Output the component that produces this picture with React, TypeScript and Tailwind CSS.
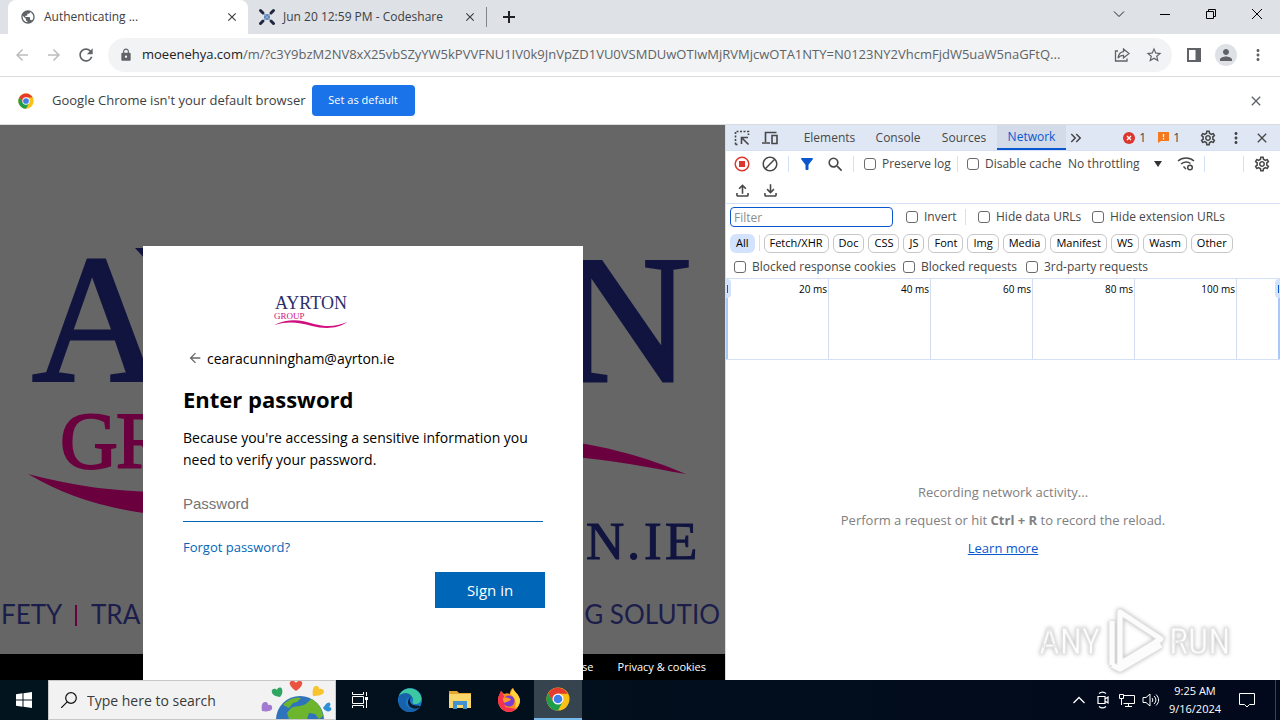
import React from 'react';
import {
  MdArrowBack,
  MdArrowForward,
  MdBlock,
  MdClose,
  MdFilterAlt,
  MdKeyboardDoubleArrowRight,
  MdLock,
  MdMoreVert,
  MdOutlineFileDownload,
  MdOutlineFileUpload,
  MdOutlineSettings,
  MdPerson,
  MdPublic,
  MdRefresh,
  MdSearch,
  MdStarOutline,
} from 'react-icons/md';

interface IconButtonProps {
  label: string;
  className?: string;
  children: React.ReactNode;
}

const IconButton: React.FC<IconButtonProps> = ({ label, className = 'size-8', children }) => (
  <button aria-label={label} className={`flex shrink-0 items-center justify-center ${className}`}>
    {children}
  </button>
);

const ChromeLogo = ({ className }: { className: string }) => (
  <svg viewBox="0 0 48 48" className={className} aria-hidden="true">
    <circle cx="24" cy="24" r="23" fill="#fbc116" />
    <path d="M4.1 12.5 L14.5 30 L24 24 L24 13.5 L43.9 13.5 A23 23 0 0 0 4.1 12.5Z" fill="#e33b2e" />
    <path d="M4.1 12.5 A23 23 0 0 0 24 47 L33.5 29.5 L24 34 L14.5 29.5 Z" fill="#1e9e4a" />
    <circle cx="24" cy="24" r="11" fill="#fff" />
    <circle cx="24" cy="24" r="8.6" fill="#3f7ee8" />
  </svg>
);

const CodeshareIcon = () => (
  <svg viewBox="0 0 18 18" className="size-[18px] shrink-0" aria-hidden="true">
    <path
      d="M2.5 2.5 5 5M15.5 2.5 13 5M2.5 15.5 5 13M15.5 15.5 13 13"
      stroke="#20263c"
      strokeWidth="3"
      strokeLinecap="round"
    />
    <circle cx="9" cy="9" r="3" fill="#5c84bd" />
    <path d="M6 6 12 12M12 6 6 12" stroke="#8da6cb" strokeWidth="1" />
  </svg>
);

const TabStrip = () => (
  <div className="flex h-[34px] items-stretch bg-[#dee1e6] pl-2 text-[12px] text-[#3c4043]">
    <div className="flex w-60 items-center rounded-t-lg bg-white pr-2 pl-3">
      <MdPublic className="size-4 text-[#5f6368]" />
      <span className="ml-2 flex-1">Authenticating ...</span>
      <IconButton label="Close tab" className="size-4">
        <MdClose className="size-3.5" />
      </IconButton>
    </div>
    <div className="flex w-[238px] items-center pr-2 pl-2.5">
      <CodeshareIcon />
      <span className="ml-[7px] flex-1">Jun 20 12:59 PM - Codeshare</span>
      <IconButton label="Close tab" className="size-4">
        <MdClose className="size-3.5" />
      </IconButton>
    </div>
    <div className="h-5 w-px self-center bg-[#80868b]" />
    <IconButton label="New tab" className="w-11">
      <svg viewBox="0 0 12 12" className="size-3" stroke="#202124" strokeWidth="2">
        <path d="M6 0V12M0 6H12" />
      </svg>
    </IconButton>
    <div className="ml-auto flex pb-1.5">
      <IconButton label="Search tabs" className="w-[46px]">
        <svg viewBox="0 0 12 12" className="size-3" fill="none" stroke="#202124">
          <path d="M1 3.5 6 8.5 11 3.5" />
        </svg>
      </IconButton>
      <IconButton label="Minimize" className="w-[46px]">
        <svg viewBox="0 0 10 10" className="size-2.5" stroke="#000">
          <path d="M0 5.5H10" />
        </svg>
      </IconButton>
      <IconButton label="Restore" className="w-[46px]">
        <svg viewBox="0 0 10 10" className="size-2.5" fill="none" stroke="#000">
          <path d="M.5 2.5H7.5V9.5H.5ZM2.5 2.5V.5H9.5V7.5H7.5" />
        </svg>
      </IconButton>
      <IconButton label="Close window" className="w-[46px]">
        <svg viewBox="0 0 10 10" className="size-2.5" stroke="#000">
          <path d="M0 0 10 10M10 0 0 10" />
        </svg>
      </IconButton>
    </div>
  </div>
);

const AddressBar = () => (
  <div className="flex h-[43px] items-center border-b border-[#dadce0] bg-white px-1.5 text-[#5f6368]">
    <IconButton label="Back">
      <MdArrowBack className="size-[18px] text-[#babcbe]" />
    </IconButton>
    <IconButton label="Forward">
      <MdArrowForward className="size-[18px] text-[#babcbe]" />
    </IconButton>
    <IconButton label="Reload">
      <MdRefresh className="size-5" />
    </IconButton>
    <div className="ml-1.5 flex h-[34px] min-w-0 flex-1 items-center rounded-full bg-[#f1f3f4] pr-0.5 pl-[11px]">
      <MdLock className="size-3.5 shrink-0" />
      <p className="ml-[9px] flex-1 text-[13px] whitespace-nowrap">
        <span className="text-[#202124]">moeenehya.com</span>
        /m/?c3Y9bzM2NV8xX25vbSZyYW5kPVVFNU1IV0k9JnVpZD1VU0VSMDUwOTIwMjRVMjcwOTA1NTY=N0123NY2VhcmFjdW5uaW5naGFtQ...
      </p>
      <IconButton label="Share">
        <svg viewBox="0 0 16 16" className="size-4" fill="none" stroke="#5f6368" strokeWidth="1.3">
          <path d="M4 4H1.5V14H13V11.5" />
          <path d="M9.5 2 15 6.5 9.5 11V8.3C7 8.3 5.5 9 4 11 4.5 7.5 6.5 5 9.5 4.6Z" />
        </svg>
      </IconButton>
      <IconButton label="Bookmark this tab">
        <MdStarOutline className="size-[18px]" />
      </IconButton>
    </div>
    <IconButton label="Side panel" className="ml-1.5 size-8">
      <svg viewBox="0 0 14 14" className="size-3.5">
        <path d="M1 1H13V13H1Z" fill="none" stroke="#5f6368" strokeWidth="2" />
        <path d="M8.5 0H14V14H8.5Z" fill="#5f6368" />
      </svg>
    </IconButton>
    <IconButton label="Profile">
      <span className="flex size-[22px] items-center justify-center rounded-full bg-[#dee1e6]">
        <MdPerson className="size-[18px]" />
      </span>
    </IconButton>
    <IconButton label="Menu">
      <MdMoreVert className="size-[18px]" />
    </IconButton>
  </div>
);

const DefaultBrowserBar = () => (
  <div className="flex h-12 items-center border-b border-[#dadce0] bg-white pr-4 pl-[18px]">
    <ChromeLogo className="size-4" />
    <span className="ml-[18px] text-[13px] text-[#3c4043]">Google Chrome isn't your default browser</span>
    <button className="ml-1.5 h-[31px] w-[103px] rounded bg-[#1a73e8] text-[11px] text-white">
      Set as default
    </button>
    <IconButton label="Dismiss" className="ml-auto size-4">
      <MdClose className="size-4 text-[#5f6368]" />
    </IconButton>
  </div>
);

/* Dimmed company artwork, only the parts that show beside the dialog */
const Backdrop = () => (
  <svg
    viewBox="0 0 725 555"
    preserveAspectRatio="xMinYMin slice"
    className="absolute inset-0 h-full w-full font-['Liberation_Serif',serif]"
    aria-hidden="true"
  >
    <g fill="#10143f" stroke="#10143f" strokeWidth="3" fontSize="182">
      <text x="32" y="256">A</text>
      <text x="560" y="256">N</text>
    </g>
    <path d="M135 123H160V135H146Z" fill="#10143f" />
    <g fill="#6b003f" stroke="#6b003f" strokeWidth="2" fontSize="80">
      <text x="60" y="343">G</text>
      <text x="116" y="343">R</text>
    </g>
    <path
      d="M28 349C75 361 110 366 160 367 260 366 400 314 520 312 600 316 650 334 686 349 650 343 610 334 570 332 460 330 300 394 180 392 120 388 70 374 28 349Z"
      fill="#6b003f"
    />
    <g fill="#10143f" stroke="#10143f" fontSize="53">
      <text x="586" y="434">N</text>
      <text x="627" y="434">.</text>
      <text x="644" y="434">I</text>
      <text x="665" y="434">E</text>
    </g>
    <g fill="#1b1d4b" fontSize="26" fontFamily="Lato, sans-serif">
      <text x="1" y="499">FETY</text>
      <text x="91" y="499">TRA</text>
      <text x="720" y="499" textAnchor="end">
        G SOLUTIO
      </text>
    </g>
    <path d="M76 480V501" stroke="#6b003f" strokeWidth="2" />
  </svg>
);

const CompanyLogo = () => (
  <svg
    viewBox="0 0 74 36"
    className="h-9 w-[74px] font-['Liberation_Serif',serif]"
    role="img"
    aria-label="Ayrton Group"
  >
    <text x="1" y="15" fontSize="18" fill="#2b2f6b">AYRTON</text>
    <text x="0" y="25" fontSize="9" fill="#d0107f">GROUP</text>
    <path d="M0 31C16 24 26 26 40 30 52 33 62 33 73 28 64 35 50 35 38 32 24 28 14 27 0 31Z" fill="#d0107f" />
  </svg>
);

const SignInDialog = () => (
  <form
    onSubmit={(e) => e.preventDefault()}
    className="flex h-full w-[440px] flex-col items-start bg-white px-10 pt-12 text-black"
  >
    <div className="ml-[91px]">
      <CompanyLogo />
    </div>
    <div className="mt-4 flex h-6 items-center pl-1 text-[14px]">
      <button type="button" aria-label="Back" className="mr-1">
        <MdArrowBack className="size-4 text-[#666]" />
      </button>
      cearacunningham@ayrton.ie
    </div>
    <h1 className="mt-[13px] text-[22px] leading-8 font-bold">Enter password</h1>
    <p className="mt-3 text-[14px] leading-[22px]">
      Because you're accessing a sensitive information you need to verify your password.
    </p>
    <input
      type="password"
      placeholder="Password"
      aria-label="Password"
      className="mt-[15px] h-9 w-full border-b border-[#0067b8] font-['Liberation_Sans',sans-serif] text-[15px] outline-none placeholder:text-[#757575]"
    />
    <a href="#" className="mt-[15px] text-[13px] leading-5 text-[#0067b8]">Forgot password?</a>
    <button className="mt-[15px] -mr-0.5 h-9 w-[110px] self-end bg-[#0067b8] text-[15px] text-white">
      Sign in
    </button>
  </form>
);

const WebPage = () => (
  <main className="relative flex min-w-0 flex-1 flex-col justify-end overflow-hidden bg-[#666]">
    <Backdrop />
    <footer className="relative flex h-[26px] items-center justify-end gap-6 bg-black pr-[19px] text-[11px] text-white">
      <a href="#">Terms of use</a>
      <a href="#">Privacy & cookies</a>
    </footer>
    <div className="absolute inset-x-0 top-[121px] bottom-0 flex justify-center pl-px">
      <SignInDialog />
    </div>
  </main>
);

const Check = ({ label, className = '' }: { label: string; className?: string }) => (
  <label className={`flex shrink-0 items-center gap-1.5 whitespace-nowrap ${className}`}>
    <input type="checkbox" className="size-3 appearance-none rounded-[3px] border border-[#6b6b6b] bg-white" />
    {label}
  </label>
);

const Divider = () => <div className="h-4 w-px shrink-0 bg-[#d3e0f5]" />;

const resourceTypes = ['Fetch/XHR', 'Doc', 'CSS', 'JS', 'Font', 'Img', 'Media', 'Manifest', 'WS', 'Wasm', 'Other'];
const ticks = ['20 ms', '40 ms', '60 ms', '80 ms', '100 ms'];

const PanelTabs = () => (
  <div className="flex h-[26px] items-center border-b border-[#d3e0f5] bg-[#dfe7f5] pr-1.5">
    <IconButton label="Inspect element" className="ml-0.5 size-7">
      <svg viewBox="0 0 16 16" className="size-4" fill="none" stroke="#474747" strokeWidth="1.6">
        <path d="M1.5 14.5V1.5H14.5V5" strokeDasharray="2 1.5" />
        <path d="M1.5 14.5H5" strokeDasharray="2 1.5" />
        <path d="M7.5 14V7.5H14M8 8 14.5 14.5" />
      </svg>
    </IconButton>
    <IconButton label="Device toolbar" className="size-7">
      <svg viewBox="0 0 16 16" className="size-4" fill="none" stroke="#474747" strokeWidth="1.6">
        <path d="M14.5 2.5H3.5V12M0 13H8" />
        <path d="M10 5.5H15V13.5H10Z" />
      </svg>
    </IconButton>
    <div role="tablist" className="ml-2.5 flex h-full items-stretch">
      <button role="tab" className="w-[71px]">Elements</button>
      <button role="tab" className="w-[66px]">Console</button>
      <button role="tab" className="w-[66px]">Sources</button>
      <button
        role="tab"
        aria-selected="true"
        className="w-[69px] border-b-2 border-[#0b57d0] bg-[#d3dbe9] text-[#0b57d0]"
      >
        Network
      </button>
    </div>
    <IconButton label="More tabs" className="size-5">
      <MdKeyboardDoubleArrowRight className="size-[18px]" />
    </IconButton>
    <div className="ml-auto flex items-center">
      <svg viewBox="0 0 12 12" className="size-3" aria-hidden="true">
        <circle cx="6" cy="6" r="6" fill="#dc362e" />
        <path d="M4 4 8 8M8 4 4 8" stroke="#fff" strokeWidth="1.3" />
      </svg>
      <span className="ml-1">1</span>
      <svg viewBox="0 0 11 11" className="ml-3 size-[11px]" aria-hidden="true">
        <path d="M0 0H11V9H3L0 11Z" fill="#f4791f" />
        <path d="M5.5 2V5M5.5 6V7.5" stroke="#fff" strokeWidth="1.3" />
      </svg>
      <span className="ml-1">1</span>
    </div>
    <IconButton label="Settings" className="ml-3.5 size-7">
      <MdOutlineSettings className="size-[18px]" />
    </IconButton>
    <IconButton label="More options" className="size-7">
      <MdMoreVert className="size-[18px]" />
    </IconButton>
    <IconButton label="Close developer tools" className="size-6">
      <MdClose className="size-4" />
    </IconButton>
  </div>
);

const NetworkToolbar = () => (
  <div className="border-b border-[#d3e0f5]">
    <div className="flex h-[26px] items-center pl-0.5">
      <IconButton label="Stop recording" className="size-7">
        <svg viewBox="0 0 16 16" className="size-4">
          <circle cx="8" cy="8" r="6.8" fill="none" stroke="#dc362e" strokeWidth="1.5" />
          <path d="M5 5H11V11H5Z" fill="#dc362e" />
        </svg>
      </IconButton>
      <IconButton label="Clear" className="mr-1 size-7">
        <MdBlock className="size-[18px]" />
      </IconButton>
      <Divider />
      <IconButton label="Filter" className="ml-1 size-7">
        <MdFilterAlt className="size-[18px] text-[#0b57d0]" />
      </IconButton>
      <IconButton label="Search" className="mr-1 size-7">
        <MdSearch className="size-[19px]" />
      </IconButton>
      <Divider />
      <Check label="Preserve log" className="ml-2.5 w-[93px]" />
      <Divider />
      <Check label="Disable cache" className="ml-[9px] w-[101px]" />
      <select aria-label="Throttling" className="w-[94px] appearance-none bg-transparent">
        <option>No throttling</option>
      </select>
      <svg viewBox="0 0 8 6" className="-ml-2 h-1.5 w-2" fill="#333" aria-hidden="true">
        <path d="M0 0H8L4 6Z" />
      </svg>
      <IconButton label="Network conditions" className="ml-2.5 size-7">
        <svg viewBox="0 0 18 16" className="h-4 w-[18px]" fill="none" stroke="#474747" strokeWidth="1.5">
          <path d="M1 5C5.5 1 12.5 1 17 5M4 8C7 5.3 11 5.3 13.5 7.5" />
          <path d="M6.5 10.5 9 13" />
          <circle cx="13" cy="11.5" r="2.3" />
        </svg>
      </IconButton>
      <div className="ml-1">
        <Divider />
      </div>
      <div className="ml-auto flex items-center">
        <Divider />
        <IconButton label="Network settings" className="mx-1 size-7">
          <MdOutlineSettings className="size-[18px]" />
        </IconButton>
      </div>
    </div>
    <div className="flex h-[26px] items-center pl-0.5">
      <IconButton label="Import HAR" className="size-7">
        <MdOutlineFileUpload className="size-[19px]" />
      </IconButton>
      <IconButton label="Export HAR" className="size-7">
        <MdOutlineFileDownload className="size-[19px]" />
      </IconButton>
    </div>
  </div>
);

const FilterBar = () => (
  <div className="border-b border-[#d3e0f5]">
    <div className="flex h-[26px] items-center pl-1">
      <input
        type="text"
        placeholder="Filter"
        aria-label="Filter"
        className="h-5 w-[163px] rounded border border-[#0b57d0] px-[3px] outline-none placeholder:text-[#8c8c8c]"
      />
      <Check label="Invert" className="ml-[13px] w-[59px]" />
      <Divider />
      <Check label="Hide data URLs" className="ml-3 w-[114px]" />
      <Check label="Hide extension URLs" />
    </div>
    <div className="flex h-[26px] items-center gap-1 pl-1 text-[11px] text-black">
      <button className="h-[19px] rounded-md bg-[#d3e3fd] px-1.5">All</button>
      <Divider />
      {resourceTypes.map((type) => (
        <button key={type} className="h-[19px] rounded-md border border-[#c7c7c7] px-[5px]">
          {type}
        </button>
      ))}
    </div>
    <div className="flex h-[22px] items-center pl-2">
      <Check label="Blocked response cookies" className="w-[169px]" />
      <Check label="Blocked requests" className="w-[123px]" />
      <Check label="3rd-party requests" />
    </div>
  </div>
);

const Overview = () => (
  <div className="relative flex h-[81px] border-b border-[#d3e0f5] pl-px text-[10px] text-black">
    {ticks.map((tick) => (
      <div key={tick} className="w-[102px] shrink-0 border-r border-[#d3dcf0] pt-[3px] pr-px text-right">
        {tick}
      </div>
    ))}
    <div className="absolute inset-y-0 left-0 w-0.5 bg-[#a8c7fa]" />
    <div className="absolute top-0 left-0 flex h-[19px] w-[5px] items-center rounded-r bg-[#d3e3fd] pl-px">
      <div className="h-2 w-px bg-[#0b57d0]" />
    </div>
    <div className="absolute inset-y-0 right-0 w-0.5 bg-[#a8c7fa]" />
    <div className="absolute top-0 right-0 flex h-[19px] w-[5px] items-center justify-end rounded-l bg-[#d3e3fd] pr-px">
      <div className="h-2 w-px bg-[#0b57d0]" />
    </div>
  </div>
);

const Watermark = () => (
  <svg
    viewBox="0 0 200 72"
    className="absolute right-[44px] bottom-1 h-[72px] w-[200px] drop-shadow-[0_0_2px_#bbbbbb]"
    aria-hidden="true"
  >
    <g
      fill="#fdfdfd"
      stroke="#e4e4e4"
      fontSize="36"
      fontFamily="'Liberation Sans Narrow','Roboto Condensed',Roboto,sans-serif"
    >
      <text x="3" y="50">ANY</text>
      <text x="133" y="50">RUN</text>
    </g>
    <path
      d="M76 61V17M84 8 125 35 84 60ZM76 61 84 65 125 41"
      fill="none"
      stroke="#e0e0e0"
      strokeWidth="7"
      strokeLinejoin="round"
    />
    <path
      d="M76 61V17M84 8 125 35 84 60ZM76 61 84 65 125 41"
      fill="none"
      stroke="#fcfcfc"
      strokeWidth="5"
      strokeLinejoin="round"
    />
  </svg>
);

const DevTools = () => (
  <aside className="relative flex w-[555px] shrink-0 flex-col border-l border-[#d3dcea] bg-white text-[12px] text-[#474747]">
    <PanelTabs />
    <NetworkToolbar />
    <FilterBar />
    <Overview />
    <div className="flex flex-1 flex-col items-center justify-center gap-2 text-[13px] leading-5 text-[#808080]">
      <p>Recording network activity...</p>
      <p>
        Perform a request or hit <b>Ctrl + R</b> to record the reload.
      </p>
      <a href="#" className="text-[#0b57d0] underline">Learn more</a>
    </div>
    <Watermark />
  </aside>
);

const EarthIcon = () => (
  <svg viewBox="0 0 72 38" className="h-[38px] w-[72px]" aria-hidden="true">
    <circle cx="39" cy="39" r="24" fill="#2f73bd" />
    <path d="M22 24C27 18 34 16 40 17L36 21 32 22 28 27Z" fill="#6cb52d" />
    <path d="M30 27C36 24 42 26 46 22L50 18C57 21 61 28 62 35L58 38 54 33 48 32 46 38H28L26 32Z" fill="#6cb52d" />
    <path d="M35 10C29 6 28 2 29 1 31-1 34 0 35 2 36 0 39-1 41 1 42 3 40 7 35 10Z" fill="#ea5340" />
    <path d="M19 16C12 15 10 12 11 9 13 7 15 8 16 9 17 6 20 6 21 8 22 11 21 14 19 16Z" fill="#2fa562" />
    <path d="M52 15C51 10 52 5 55 5 58 5 58 7 58 8 61 7 63 9 63 11 62 14 57 15 52 15Z" fill="#f7c32e" />
    <path d="M1 30C0 25 1 21 4 21 7 21 7 23 7 24 10 23 12 25 11 28 10 30 6 31 1 30Z" fill="#a27bd0" />
    <path d="M62 27C64 24 67 20 69 22 70 24 69 25 68 26 71 26 71 29 69 30 67 31 64 30 62 27Z" fill="#2f8fd8" />
  </svg>
);

const EdgeIcon = () => (
  <svg viewBox="0 0 24 24" className="size-6">
    <circle cx="12" cy="12" r="12" fill="#1b78c9" />
    <path d="M1 8C4-1 17-2 22 6 25 11 23 17 16 16 13 15 16 13 15 10 12 6 5 5 1 8Z" fill="#3cc8a0" />
    <path d="M1 8C6 3 12 5 14 9 9 8 6 14 9 18 13 23 18 21 22 19 17 26 5 26 1 17Z" fill="#1762ab" />
    <path d="M14 9C11 10 11 15 15 17 19 18 22 17 22 19 18 22 11 21 10 15 10 11 12 9 14 9Z" fill="#0a1c2c" />
  </svg>
);

const ExplorerIcon = () => (
  <svg viewBox="0 0 22 20" className="h-5 w-[22px]">
    <path d="M0 1H8L10 3H22V18H0Z" fill="#e5a62f" />
    <path d="M0 4H22V18H0Z" fill="#fbd66b" />
    <path d="M4 11H18V19H14V15H8V19H4Z" fill="#3f92cf" />
  </svg>
);

const FirefoxIcon = () => (
  <svg viewBox="0 0 24 24" className="size-6">
    <path d="M1 12C1 8 3 6 4 3L7 6C9 5 11 5 13 6 13 3 14 1 16 0 17 4 22 6 23 12 23 19 18 24 12 24 6 24 1 19 1 12Z" fill="#ff8a1e" />
    <path d="M1 12C1 8 3 6 4 3L7 8 8 19 19 21C15 25 8 25 4 20 2 18 1 15 1 12Z" fill="#f7324f" />
    <path d="M16 0C17 4 22 6 23 12 23 17 20 20 18 20 20 14 18 9 13 6Z" fill="#ffd33b" />
    <circle cx="12" cy="13" r="5.5" fill="#7a3fd0" />
    <path d="M6 10C9 9 11 10 14 11 13 14 9 13 8 15 6 14 6 12 6 10Z" fill="#ff9c27" />
  </svg>
);

const Taskbar = () => (
  <div className="flex h-10 shrink-0 items-stretch bg-gradient-to-r from-[#02141d] to-[#02091c] text-white">
    <IconButton label="Start" className="w-12">
      <svg viewBox="0 0 16 16" className="size-4" fill="#fff">
        <path d="M0 2.2 6.5 1.3V7.5H0ZM7.5 1.2 16 0V7.5H7.5ZM0 8.5H6.5V14.7L0 13.8ZM7.5 8.5H16V16L7.5 14.8Z" />
      </svg>
    </IconButton>
    <label className="flex w-72 items-center border border-[#c8c8c8] bg-[#f2f2f2] pl-3">
      <svg viewBox="0 0 16 16" className="size-4 shrink-0" fill="none" stroke="#111" strokeWidth="1.2">
        <circle cx="10" cy="6" r="5.3" />
        <path d="M6.2 9.8 0 16" />
      </svg>
      <input
        type="text"
        placeholder="Type here to search"
        aria-label="Type here to search"
        className="ml-2.5 min-w-0 flex-1 bg-transparent text-[14px] outline-none placeholder:text-[#3a3a3a]"
      />
      <span className="mr-0.5 self-end">
        <EarthIcon />
      </span>
    </label>
    <IconButton label="Task view" className="w-12">
      <svg viewBox="0 0 16 16" className="size-4" fill="none" stroke="#fff">
        <path d="M.5 0V2.5H11.5V0M.5 4.5H11.5V11.5H.5ZM.5 16V13.5H11.5V16M14.5 0V4M14.5 8V16" />
        <path d="M13 5H16V8H13Z" fill="#fff" stroke="none" />
      </svg>
    </IconButton>
    <IconButton label="Microsoft Edge" className="w-[51px]">
      <EdgeIcon />
    </IconButton>
    <IconButton label="File Explorer" className="w-[49px]">
      <ExplorerIcon />
    </IconButton>
    <IconButton label="Firefox" className="w-[50px]">
      <FirefoxIcon />
    </IconButton>
    <IconButton label="Google Chrome" className="w-12 border-b-2 border-[#76b9ed] bg-[#35444f]">
      <ChromeLogo className="size-6" />
    </IconButton>
    <div className="ml-auto flex items-center">
      <IconButton label="Show hidden icons" className="size-6">
        <svg viewBox="0 0 12 8" className="h-2 w-3" fill="none" stroke="#fff" strokeWidth="1.3">
          <path d="M.5 7 6 1.5 11.5 7" />
        </svg>
      </IconButton>
      <IconButton label="Meet now" className="size-6">
        <svg viewBox="0 0 16 18" className="h-[18px] w-4" fill="none" stroke="#fff" strokeWidth="1.2">
          <path d="M3 5.5H10V12.5H3ZM10 8 13 6V12L10 10M4 2.5C6 .8 9 .8 11 2.5M4 15.5C6 17.2 9 17.2 11 15.5" />
        </svg>
      </IconButton>
      <IconButton label="Network" className="size-6">
        <svg viewBox="0 0 16 14" className="h-3.5 w-4" fill="none" stroke="#fff">
          <path d="M5 2.5H15.5V10.5H4.5M9.5 10.5V13M6 13.5H13M.5 1.5H4.5V5.5H.5ZM2.5 5.5V12" />
        </svg>
      </IconButton>
      <IconButton label="Volume" className="size-6">
        <svg viewBox="0 0 18 14" className="h-3.5 w-[18px]" fill="none" stroke="#fff">
          <path d="M1 4.5H4L8 1V13L4 9.5H1ZM10 5C11 6 11 8 10 9M12 3C14.5 5.5 14.5 8.5 12 11M14 1.5C17.5 5 17.5 9 14 12.5" />
        </svg>
      </IconButton>
      <div className="w-16 text-center text-[11px] leading-[18px]">
        <p>9:25 AM</p>
        <p>9/16/2024</p>
      </div>
      <IconButton label="Notifications" className="mr-2 size-10">
        <svg viewBox="0 0 16 16" className="size-4" fill="none" stroke="#fff">
          <path d="M.5 1.5H15.5V12.5H10.5L8 15 5.5 12.5H.5Z" />
        </svg>
      </IconButton>
      <div className="mr-1 h-full w-px bg-[#3b4350]" />
    </div>
  </div>
);

const App: React.FC = () => (
  <div className="flex h-screen flex-col overflow-hidden bg-white font-['Open_Sans','Noto_Sans',sans-serif]">
    <TabStrip />
    <AddressBar />
    <DefaultBrowserBar />
    <div className="flex min-h-0 flex-1">
      <WebPage />
      <DevTools />
    </div>
    <Taskbar />
  </div>
);

export default App;
